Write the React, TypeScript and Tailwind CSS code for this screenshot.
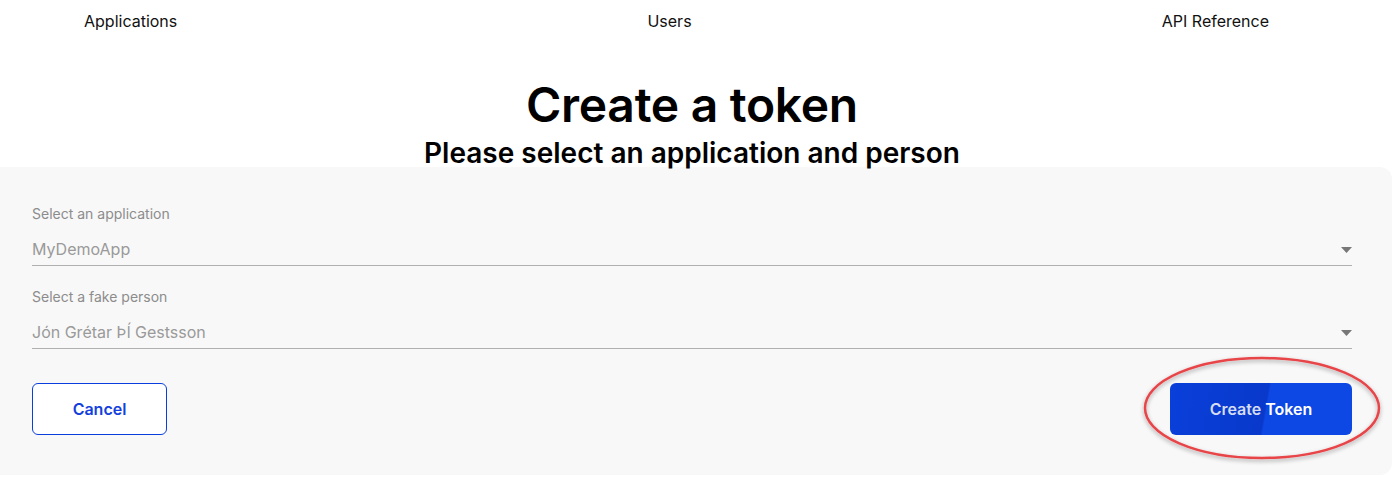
import { ReactNode } from 'react';

const font = { fontFamily: 'Inter, "Noto Sans", sans-serif' };

const NavLink = ({ children }: { children: ReactNode }) => (
  <a className="text-[16px] leading-6 text-[#111111]" href="#">
    {children}
  </a>
);

const SelectField = ({ label, value }: { label: string; value: string }) => (
  <div className="flex flex-col">
    <span className="text-[14px] leading-5 text-[#8c8c8c]">{label}</span>
    <div className="mt-[13px] flex items-center justify-between border-b border-[#b0b0b0] pb-[4px]">
      <span className="text-[16px] leading-6 text-[#9a9a9a]">{value}</span>
      <svg className="mt-[2px]" width="11" height="6" viewBox="0 0 11 6">
        <path d="M0 0h11L5.5 6z" fill="#777777" />
      </svg>
    </div>
  </div>
);

export default function App() {
  return (
    <div className="relative h-[494px] w-[1398px] overflow-hidden bg-white" style={font}>
      <nav className="flex h-[42px] items-center justify-between pl-[84px] pr-[129px]">
        <NavLink>Applications</NavLink>
        <NavLink>Users</NavLink>
        <NavLink>API Reference</NavLink>
      </nav>

      <header className="mt-[35px] flex h-[90px] flex-col items-center pr-[14px] text-black">
        <h1 className="text-[48px] font-semibold leading-[56px] tracking-[-0.3px]">Create a token</h1>
        <h2 className="mt-[5px] text-[28px] font-semibold leading-[30px]">
          Please select an application and person
        </h2>
      </header>

      <section className="w-[1392px] rounded-r-xl bg-[#f8f8f8] pb-[40px] pl-8 pr-10 pt-[37px]">
        <SelectField label="Select an application" value="MyDemoApp" />
        <div className="mt-[21px]">
          <SelectField label="Select a fake person" value="Jón Grétar Þĺ Gestsson" />
        </div>
        <div className="mt-[34px] flex items-center justify-between">
          <button
            className="h-[52px] w-[135px] rounded-md border border-[#0b3fdd] bg-white text-[16px] font-semibold text-[#1340dd]"
            type="button"
          >
            Cancel
          </button>
          <button
            className="h-[52px] w-[182px] rounded-md bg-[linear-gradient(100deg,#0a3fda_0%,#0839cb_52%,#0d47e4_53%,#0d47e4_100%)] text-[16px] font-semibold text-white"
            type="button"
          >
            <span className="text-[#d6ddf2]">Create</span> Token
          </button>
        </div>
      </section>

      <svg
        className="pointer-events-none absolute left-[1138px] top-[350px]"
        width="252"
        height="118"
        viewBox="0 0 252 118"
      >
        <defs>
          <filter id="sh" x="-10%" y="-20%" width="120%" height="140%">
            <feDropShadow dx="0" dy="2" stdDeviation="2" floodColor="#000000" floodOpacity="0.35" />
          </filter>
        </defs>
        <ellipse cx="124" cy="58" rx="117" ry="50" fill="none" stroke="#e8454a" strokeWidth="2.5" filter="url(#sh)" />
      </svg>
    </div>
  );
}
